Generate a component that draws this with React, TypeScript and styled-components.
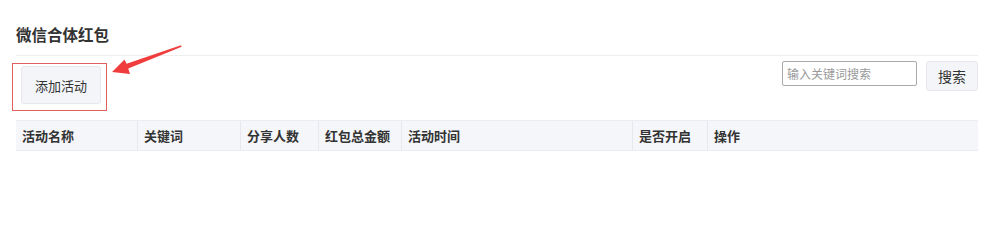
import styled, { createGlobalStyle } from 'styled-components';

const GlobalStyle = createGlobalStyle`
  body {
    margin: 0;
    background: #fff;
    font-family: "Noto Sans CJK SC", "Noto Sans", sans-serif;
    color: #333;
  }
`;

const columns = [
  { title: '活动名称', width: 121 },
  { title: '关键词', width: 103 },
  { title: '分享人数', width: 78 },
  { title: '红包总金额', width: 83 },
  { title: '活动时间', width: 231 },
  { title: '是否开启', width: 75 },
  { title: '操作', width: 271 },
];

const Page = styled.div`
  padding: 0 19px 0 16px;
`;

const Title = styled.h2`
  margin: 0;
  padding: 23px 0 10px;
  font-size: 15.5px;
  line-height: 22px;
  font-weight: 700;
  color: #333;
  border-bottom: 1px solid #eeeeee;
`;

const Toolbar = styled.div`
  display: flex;
  justify-content: space-between;
  align-items: flex-start;
  margin-top: 5px;
`;

const AddWrap = styled.div`
  position: relative;
  margin: 5px 0 16px 5px;
`;

const Button = styled.button`
  height: 38px;
  padding: 0 13px;
  border: 1px solid #e6e8ee;
  border-radius: 3px;
  background: #f4f5f9;
  color: #333;
  font-family: inherit;
  font-size: 13px;
  cursor: pointer;
`;

const SearchButton = styled(Button)`
  height: 30px;
  width: 52px;
  padding: 0;
  font-size: 14px;
`;

const Highlight = styled.div`
  position: absolute;
  left: -9px;
  top: -3px;
  width: 95px;
  height: 48px;
  box-sizing: border-box;
  border: 1.5px solid #e06060;
  pointer-events: none;
`;

const Arrow = styled.svg`
  position: absolute;
  left: 85px;
  top: -25px;
  overflow: visible;
  pointer-events: none;
`;

const SearchBox = styled.div`
  display: flex;
  align-items: flex-start;
  gap: 9px;
`;

const Input = styled.input`
  width: 135px;
  height: 25px;
  box-sizing: border-box;
  padding: 0 4px;
  border: 1px solid #a9a9a9;
  border-radius: 2px;
  font-family: inherit;
  font-size: 12px;
  outline: none;
  &::placeholder {
    color: #999;
  }
`;

const Table = styled.div`
  display: flex;
  height: 31px;
  background: #f5f6fa;
  border-top: 1px solid #ebedf2;
  border-bottom: 1px solid #ebedf2;
  box-sizing: border-box;
`;

const HeadCell = styled.div<{ $width: number }>`
  width: ${(p) => p.$width}px;
  flex: none;
  display: flex;
  align-items: center;
  padding-left: 6px;
  box-sizing: border-box;
  font-size: 13px;
  font-weight: 700;
  color: #333;
  & + & {
    border-left: 1px solid #e6e8ee;
  }
`;

export default function App() {
  return (
    <>
      <GlobalStyle />
      <Page>
        <Title>微信合体红包</Title>
        <Toolbar>
          <AddWrap>
            <Button>添加活动</Button>
            <Highlight />
            <Arrow width="80" height="40" viewBox="0 0 80 40">
              <polygon
                points="6,31 18.5,18.5 20.5,22.8 75,4.3 75.6,5.8 22.3,27.6 24,33"
                fill="#f03c3c"
              />
            </Arrow>
          </AddWrap>
          <SearchBox>
            <Input placeholder="输入关键词搜索" />
            <SearchButton>搜索</SearchButton>
          </SearchBox>
        </Toolbar>
        <Table>
          {columns.map((c) => (
            <HeadCell key={c.title} $width={c.width}>
              {c.title}
            </HeadCell>
          ))}
        </Table>
      </Page>
    </>
  );
}
